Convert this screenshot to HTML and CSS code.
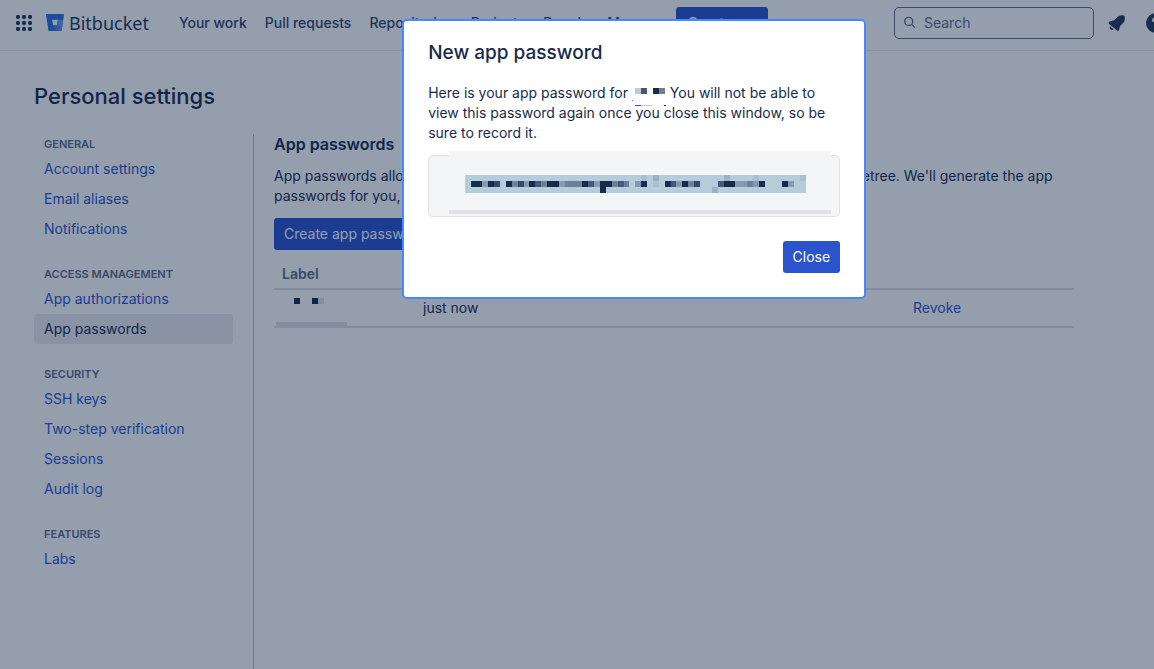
FILE: index.html
```html
<!DOCTYPE html>
<html lang="en">
<head>
    <meta charset="UTF-8">
    <meta name="viewport" content="width=device-width, initial-scale=1">
    <title>App passwords - Bitbucket</title>
    <link rel="stylesheet" href="styles.css">
</head>
<body>
<div class="page">
    <header class="header">
        <button class="icon-btn switcher" aria-label="Switch apps">
            <svg width="16" height="16" viewBox="0 0 16 16" fill="currentColor">
                <rect x="0" y="0" width="4" height="4" rx="1.4"/><rect x="6" y="0" width="4" height="4" rx="1.4"/><rect x="12" y="0" width="4" height="4" rx="1.4"/>
                <rect x="0" y="6" width="4" height="4" rx="1.4"/><rect x="6" y="6" width="4" height="4" rx="1.4"/><rect x="12" y="6" width="4" height="4" rx="1.4"/>
                <rect x="0" y="12" width="4" height="4" rx="1.4"/><rect x="6" y="12" width="4" height="4" rx="1.4"/><rect x="12" y="12" width="4" height="4" rx="1.4"/>
            </svg>
        </button>
        <a class="logo" href="#">
            <svg width="18" height="17" viewBox="0 0 18 17">
                <defs>
                    <linearGradient id="bucket" x1="1" y1="0.5" x2="0.2" y2="0.8">
                        <stop offset="0.1" stop-color="#6d9df0"/>
                        <stop offset="1" stop-color="#2f6fe0"/>
                    </linearGradient>
                </defs>
                <path fill="#2f6fe0" d="M.6 0A.6.6 0 0 0 0 .7l2.4 15.6c.1.4.4.7.8.7h11.900c.3 0 .5-.2.6-.5L18 .7a.6.6 0 0 0-.6-.7zM10.900 11.200H7.100L6.100 5.700h5.800z" fill-rule="evenodd"/>
                <path fill="url(#bucket)" d="M17.200 5.700h-5.300l-1 5.500H7.100l-4.500 5.600c.2.100.4.200.6.200h11.900c.3 0 .5-.2.600-.5z"/>
            </svg>
            <span>Bitbucket</span>
        </a>
        <nav class="nav">
            <a href="#">Your work</a>
            <a href="#">Pull requests</a>
            <a href="#">Repositories</a>
            <a href="#">Projects</a>
            <a href="#">People</a>
            <a href="#">More</a>
        </nav>
        <button class="btn create">Create
            <svg width="10" height="6" viewBox="0 0 10 6" fill="none" stroke="currentColor" stroke-width="2"><path d="M1 1l4 4 4-4"/></svg>
        </button>
        <label class="search">
            <svg width="13" height="13" viewBox="0 0 13 13" fill="none" stroke="currentColor" stroke-width="1.5"><circle cx="5.300" cy="5.300" r="4.500"/><path d="M8.600 8.600L12.200 12.200"/></svg>
            <input type="text" placeholder="Search" aria-label="Search">
        </label>
        <button class="icon-btn bell" aria-label="Notifications">
            <svg width="18" height="18" viewBox="0 0 18 18" fill="currentColor">
                <path d="M1 8.200c-.6.600-.5 1.300.1 1.700l8.300 6.800c.6.500 1.300.2 1.500-.5l.9-3.200c.2-.7.6-1.200 1.100-1.700l2.300-2.300c1.700-1.700 1.900-4.500 1.500-6.400-.1-.6-.5-1-1.100-1.100-1.900-.4-4.400 0-6 1.500L7.200 5.300c-.5.500-1 .9-1.700 1.100L2.300 7.300c-.5.200-.9.400-1.300.9z"/>
                <path d="M2 12.300l3.600 3c-1 .9-2.300.8-3.100 0-.8-.7-1.100-2-.5-3z"/>
            </svg>
        </button>
        <button class="icon-btn help" aria-label="Help">
            <svg width="20" height="20" viewBox="0 0 20 20">
                <circle cx="10" cy="10" r="10" fill="currentColor"/>
                <path d="M7 8c0-4 6-4 6 0 0 2-3 2-3 4.500" fill="none" stroke="#fff" stroke-width="2" stroke-linecap="round"/>
                <circle cx="10" cy="15.200" r="1.200" fill="#fff"/>
            </svg>
        </button>
    </header>

    <h1 class="page-title">Personal settings</h1>

    <div class="columns">
        <aside class="sidebar">
            <h2>General</h2>
            <ul>
                <li><a href="#">Account settings</a></li>
                <li><a href="#">Email aliases</a></li>
                <li><a href="#">Notifications</a></li>
            </ul>
            <h2>Access management</h2>
            <ul>
                <li><a href="#">App authorizations</a></li>
                <li><a class="selected" href="#">App passwords</a></li>
            </ul>
            <h2>Security</h2>
            <ul>
                <li><a href="#">SSH keys</a></li>
                <li><a href="#">Two-step verification</a></li>
                <li><a href="#">Sessions</a></li>
                <li><a href="#">Audit log</a></li>
            </ul>
            <h2>Features</h2>
            <ul>
                <li><a href="#">Labs</a></li>
            </ul>
        </aside>

        <main class="content">
            <h2>App passwords</h2>
            <p>App passwords allow you to make API calls to your Bitbucket account via apps like Sourcetree. We'll generate the app passwords for you, and you'll need to record them.</p>
            <button class="btn">Create app password</button>
            <table class="passwords">
                <thead>
                    <tr>
                        <th class="col-label">Label</th>
                        <th class="col-created">Created</th>
                        <th></th>
                    </tr>
                </thead>
                <tbody>
                    <tr>
                        <td class="masked-cell">
                            <svg width="71" height="36" viewBox="0 0 71 36" shape-rendering="crispEdges">
                                <path fill="#172b4d" d="M18 6h6v6h-6zM36 6h6v6h-6z"/>
                                <path fill="#dfe1e6" d="M42 6h6v6h-6zM0 30h71v6H0z"/>
                            </svg>
                        </td>
                        <td>just now</td>
                        <td><a href="#">Revoke</a></td>
                    </tr>
                </tbody>
            </table>
        </main>
    </div>

    <div class="blanket">
        <div class="dialog" role="dialog" aria-labelledby="dialog-title">
            <h2 id="dialog-title">New app password</h2>
            <p>Here is your app password for
                <svg class="masked-name" width="34" height="19" viewBox="0 0 34 19" shape-rendering="crispEdges">
                    <path fill="#c4c9d3" d="M3 1h6v6H3zM9 18h12v1H9z"/>
                    <path fill="#455879" d="M9 1h6v6H9zM3 18h6v1H3z"/>
                    <path fill="#172b4d" d="M21 1h6v6h-6zM32 18h2v1h-2z"/>
                    <path fill="#707d93" d="M27 1h6v6h-6zM0 13h1v1H0z"/>
                </svg>
                You will not be able to view this password again once you close this window, so be sure to record it.</p>
            <div class="secret">
                <svg width="382" height="63" viewBox="0 0 382 63" shape-rendering="crispEdges">
                    <path fill="#f4f5f7" d="M0 0h382v63H0z"/>
                    <path fill="#dfe1e6" d="M0 59h382v4H0z"/>
                    <path fill="#b3cddb" d="M16 24h341v18H16z"/>
                    <!-- top and bottom rows -->
                    <path fill="#a8c0cf" d="M192 24h6v6h-6zM304 24h6v6h-6zM351 24h6v6h-6zM204 30h6v6h-6z"/>
                    <path fill="#9bb2c2" d="M204 24h6v6h-6zM275 24h6v6h-6zM263 36h6v6h-6z"/>
                    <!-- middle row -->
                    <path fill="#172b4d" d="M22 30h11v6H22zM39 30h6v6h-6zM57 30h6v6h-6zM80 30h6v6h-6zM98 30h12v6H98zM133 30h6v6h-6zM151 30h12v6h-6v6h-6zM192 30h6v6h-6zM216 30h6v6h-6zM233 30h6v6h-6zM275 30h11v6h-11zM310 30h6v6h-6zM333 30h6v6h-6z"/>
                    <path fill="#364969" d="M45 30h6v6h-6zM69 30h6v6h-6zM245 30h6v6h-6z"/>
                    <path fill="#465a77" d="M86 30h6v6h-6zM139 30h6v6h-6zM169 30h6v6h-6zM222 30h5v6h-5zM269 30h6v6h-6z"/>
                    <path fill="#6c819a" d="M63 30h6v6h-6zM92 30h6v6h-6zM116 30h17v6h-17zM163 30h6v6h-6zM175 30h5v6h-5zM239 30h6v6h-6zM298 30h6v6h-6z"/>
                    <path fill="#859bb1" d="M33 30h6v6h-6zM75 30h5v6h-5zM110 30h6v6h-6zM145 30h6v6h-6zM186 30h6v6h-6zM227 30h6v6h-6zM286 30h12v6h-12zM304 30h6v6h-6zM339 30h6v6h-6z"/>
                </svg>
            </div>
            <div class="dialog-footer">
                <button class="btn">Close</button>
            </div>
        </div>
    </div>
</div>
</body>
</html>
```
FILE: styles.css
```css
* {
    box-sizing: border-box;
}
html {
    overflow: hidden;
}
body {
    margin: 0;
    overflow: hidden;
    font-family: Inter, "Liberation Sans", sans-serif;
    font-size: 14px;
    line-height: 20px;
    color: #172b4d;
    background: #ffffff;
}
h1, h2, p, ul {
    margin: 0;
    padding: 0;
}
ul {
    list-style: none;
}
a {
    color: #2a53cc;
    text-decoration: none;
}
button, input {
    font: inherit;
}
.page {
    width: 110%;
    min-height: 100vh;
    display: flex;
    flex-direction: column;
}

/* header */
.header {
    display: flex;
    align-items: center;
    height: 51px;
    padding: 0 103px 5px 16px;
    border-bottom: 1px solid #ebecf0;
}
.icon-btn {
    display: flex;
    padding: 0;
    border: 0;
    background: none;
    color: #253858;
    cursor: pointer;
}
.logo {
    display: flex;
    align-items: center;
    gap: 5px;
    margin-left: 14px;
    color: #253858;
    font-family: "Noto Sans", sans-serif;
    font-size: 18px;
}
.nav {
    display: flex;
    gap: 18px;
    margin-left: 30px;
}
.nav a {
    color: #344563;
    font-weight: 500;
}
.btn {
    height: 32px;
    padding: 0 10px;
    border: 0;
    border-radius: 3px;
    background: #2a53cc;
    color: #ffffff;
    cursor: pointer;
}
.create {
    display: flex;
    align-items: center;
    gap: 14px;
    margin-left: 34px;
    padding: 0 12px;
    font-weight: 500;
}
.search {
    display: flex;
    align-items: center;
    gap: 8px;
    width: 200px;
    height: 32px;
    margin-left: auto;
    padding: 0 9px;
    border: 1px solid #5e6c84;
    border-radius: 5px;
    color: #5e6c84;
}
.search input {
    width: 100%;
    padding: 0;
    border: 0;
    outline: 0;
    background: none;
}
.search input::placeholder {
    color: #5e6c84;
    opacity: 1;
}
.bell {
    margin-left: 14px;
}
.help {
    margin-left: 20px;
}

/* settings page */
.page-title {
    padding: 31px 34px 24px;
    font-size: 22px;
    font-weight: 500;
    line-height: 28px;
}
.columns {
    display: flex;
    flex: 1;
}
.sidebar {
    width: 254px;
    padding: 0 20px 0 34px;
    border-right: 1px solid #c1c7d0;
}
.sidebar h2 {
    padding: 0 10px;
    color: #5e6c84;
    font-size: 11px;
    font-weight: 600;
    text-transform: uppercase;
}
.sidebar ul {
    margin-bottom: 20px;
}
.sidebar li a {
    display: block;
    padding: 5px 10px;
    border-radius: 3px;
}
.sidebar li .selected {
    background: #ebecf0;
    color: #172b4d;
}
.content {
    width: 800px;
    margin-left: 20px;
}
.content h2 {
    margin-bottom: 12px;
    font-size: 16px;
    font-weight: 600;
}
.content p {
    margin-bottom: 12px;
}
.passwords {
    width: 100%;
    margin-top: 10px;
    border-collapse: collapse;
    table-layout: fixed;
}
.passwords th, .passwords td {
    padding: 4px 8px;
    border-bottom: 2px solid #dfe1e6;
    text-align: left;
}
.passwords th {
    color: #5e6c84;
    font-weight: 600;
}
.passwords td {
    height: 38px;
}
.passwords .masked-cell {
    padding: 0 2px;
    vertical-align: bottom;
}
.masked-cell svg {
    display: block;
    margin-bottom: -2px;
}
.col-label {
    width: 141px;
}
.col-created {
    width: 490px;
}

/* dialog */
.blanket {
    position: absolute;
    top: 0;
    left: 0;
    display: flex;
    justify-content: center;
    align-items: flex-start;
    width: 110%;
    height: 100%;
    padding: 19px 1px 0 0;
    background: rgba(9, 30, 66, 0.43);
}
.dialog {
    width: 464px;
    padding: 20px 24px 24px;
    border: 2px solid #4688ff;
    border-radius: 5px;
    background: #ffffff;
}
.dialog h2 {
    margin-bottom: 18px;
    font-size: 19px;
    font-weight: 500;
    line-height: 24px;
}
.masked-name {
    margin-bottom: -8px;
    vertical-align: baseline;
}
.secret {
    display: flex;
    align-items: flex-end;
    height: 62px;
    margin: 12px 0 24px;
    padding: 0 0 2px 20px;
    border: 1px solid #dfe1e6;
    border-radius: 5px;
    background: #f4f5f7;
}
.secret svg {
    flex-shrink: 0;
}
.dialog-footer {
    display: flex;
    justify-content: flex-end;
}
```
